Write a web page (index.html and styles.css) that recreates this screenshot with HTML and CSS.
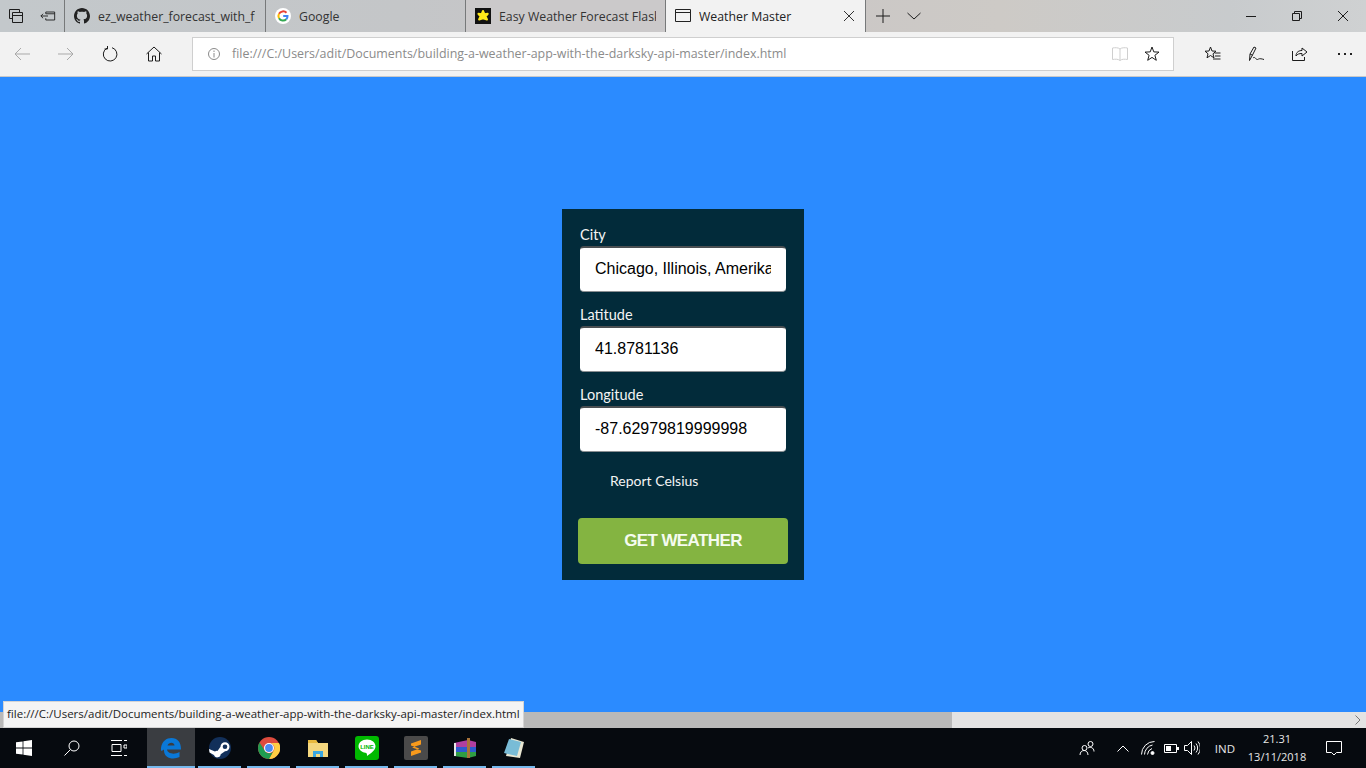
FILE: index.html
```html
<!DOCTYPE html>
<html lang="en">
<head>
    <meta charset="UTF-8">
    <title>Weather Master</title>
    <link rel="stylesheet" href="styles.css">
</head>
<body>
<div class="tabbar">
    <div class="tab-tools">
        <svg class="ico" viewBox="0 0 16 16"><path d="M1.5 1.500h10v3M1.500 1.500v9h3M4.500 4.500h10v10h-10zM4.500 7.500h10"/></svg>
        <svg class="ico" viewBox="0 0 18 16"><path d="M6.500 3.500h10v9h-10v-2M6.500 3.500v2M6.500 5.500h10M9 8H1M3.500 5.500L1 8l2.500 2.500"/></svg>
    </div>
    <div class="tab tab-first">
        <svg class="fav" viewBox="0 0 16 16"><path fill="#222" stroke="none" d="M8 0C3.600 0 0 3.600 0 8c0 3.500 2.300 6.500 5.500 7.600.4.100.5-.2.500-.4v-1.400c-2.200.5-2.700-1-2.700-1-.4-.9-.9-1.200-.9-1.200-.7-.5.100-.5.100-.5.800.1 1.200.8 1.200.8.700 1.200 1.900.9 2.300.7.100-.5.300-.9.500-1.100-1.800-.2-3.600-.9-3.600-4 0-.9.300-1.600.8-2.100-.1-.2-.4-1 .1-2.100 0 0 .7-.2 2.200.8.600-.2 1.300-.3 2-.3s1.400.1 2 .3c1.500-1 2.200-.8 2.200-.8.400 1.100.2 1.900.1 2.100.5.600.8 1.300.8 2.100 0 3.100-1.900 3.700-3.700 3.900.3.300.6.800.6 1.500v2.200c0 .2.100.5.600.4C13.700 14.500 16 11.500 16 8c0-4.400-3.600-8-8-8z"/></svg>
        <span class="tab-title">ez_weather_forecast_with_flask</span>
    </div>
    <div class="tab">
        <svg class="fav" viewBox="0 0 16 16">
            <circle cx="8" cy="8" r="8" fill="#fff" stroke="none"/>
            <path stroke="#ea4335" stroke-width="2" d="M11.500 4.800A4.700 4.700 0 0 0 4 5.800"/>
            <path stroke="#fbbc05" stroke-width="2" d="M4 5.800a4.700 4.700 0 0 0 0 4.400"/>
            <path stroke="#34a853" stroke-width="2" d="M4 10.200a4.700 4.700 0 0 0 7.300 1.100"/>
            <path stroke="#4285f4" stroke-width="2" d="M8.200 8h4.300a4.700 4.700 0 0 1-1.200 3.300"/>
        </svg>
        <span class="tab-title">Google</span>
    </div>
    <div class="tab tab-light">
        <svg class="fav" viewBox="0 0 16 16"><rect width="16" height="16" fill="#111" stroke="none"/><path fill="#ffe81a" stroke="#ffe81a" stroke-width="2" stroke-linejoin="round" d="M8 3l1.400 3.200 3.300-.4-2.100 2.700 1.400 3L8 10.200l-3.900 1.300 1.400-3-2.100-2.700 3.300.4z"/></svg>
        <span class="tab-title">Easy Weather Forecast Flask App</span>
    </div>
    <div class="tab tab-active">
        <svg class="fav" viewBox="0 0 16 14"><path stroke="#222" d="M.5.500h15v12H.5zM.5 3.500h15"/></svg>
        <span class="tab-title">Weather Master</span>
        <svg class="tab-close" viewBox="0 0 10 10"><path d="M0 0l10 10M10 0L0 10"/></svg>
    </div>
    <div class="tab-new">
        <svg class="ico-new" viewBox="0 0 14 14"><path d="M7 0v14M0 7h14"/></svg>
        <svg class="ico-down" viewBox="0 0 14 8"><path d="M.5 1L7 7l6.500-6"/></svg>
    </div>
    <div class="win-btns">
        <svg class="win-ico" viewBox="0 0 10 10"><path d="M0 5.500h10"/></svg>
        <svg class="win-ico" viewBox="0 0 10 10"><path d="M.5 2.500h7v7h-7zM2.500 2.500v-2h7v7h-2"/></svg>
        <svg class="win-ico" viewBox="0 0 10 10"><path d="M0 0l10 10M10 0L0 10"/></svg>
    </div>
</div>

<div class="toolbar">
    <div class="nav-btns">
        <svg class="nav-ico dim" viewBox="0 0 16 14"><path d="M16 7H1M7 1L1 7l6 6"/></svg>
        <svg class="nav-ico dim" viewBox="0 0 16 14"><path d="M0 7h15M9 1l6 6-6 6"/></svg>
        <svg class="nav-ico" viewBox="0 0 16 16"><path d="M5 2.200a6.800 6.800 0 1 0 5-.5M5.500 0v3h-3"/></svg>
        <svg class="nav-ico" viewBox="0 0 16 16"><path d="M.5 8L8 1l7.500 7M2.500 6.500V15h4v-5h3v5h4V6.500"/></svg>
    </div>
    <div class="addr">
        <svg class="info" viewBox="0 0 14 14"><circle cx="7" cy="7" r="5.500"/><path d="M7 6v4.500M7 3.500v1.500"/></svg>
        <span class="addr-text">file:///C:/Users/adit/Documents/building-a-weather-app-with-the-darksky-api-master/index.html</span>
        <svg class="read-ico" viewBox="0 0 16 16"><path d="M8 3C6.500 1.500 3 1.500.5 2v11.500c2.500-.5 6-.5 7.500 1 1.500-1.500 5-1.500 7.500-1V2C13 1.500 9.500 1.500 8 3zM8 3v11.500"/></svg>
        <svg class="star-ico" viewBox="0 0 16 16"><path d="M8 1l1.800 4.900 5.200.2-4.100 3.200 1.400 5L8 11.400l-4.300 2.900 1.400-5L1 6.100l5.200-.2z"/></svg>
    </div>
    <div class="tool-btns">
        <svg class="tool-ico" viewBox="0 0 17 16"><path d="M6.500 1l1.500 4 4 .2-3 2.600 1 4-3.500-2.300L3 11.800l1-4-3-2.600 4-.2zM10.500 7h6M11 10h5.500M9 13h7.500"/></svg>
        <svg class="tool-ico" viewBox="0 0 17 16"><path d="M1.500 14.500L2 8l4-7 2 1-3.500 7zM2 8l2.500 1.200M5 12c2-2 3 2 4.500 1.500S11 12 16 13.500"/></svg>
        <svg class="tool-ico" viewBox="0 0 17 16"><path d="M1.500 5v9.500h12V11M5 10c0-4 3-5.500 6-5.500V2l5 4-5 4V7.500C8 7.500 6.500 8 5 10z"/></svg>
        <div class="more"><i></i><i></i><i></i></div>
    </div>
</div>

<div class="page">
    <form class="panel">
        <label class="field-label" for="city">City</label>
        <input class="field" id="city" type="text" value="Chicago, Illinois, Amerika Serikat">
        <label class="field-label" for="lat">Latitude</label>
        <input class="field" id="lat" type="text" value="41.8781136">
        <label class="field-label" for="lng">Longitude</label>
        <input class="field" id="lng" type="text" value="-87.62979819999998">
        <div class="check-label">Report Celsius</div>
        <button class="get-btn" type="button">GET WEATHER</button>
    </form>
</div>

<div class="hscroll">
    <div class="hscroll-thumb"></div>
    <svg class="hscroll-arrow" viewBox="0 0 6 10"><path d="M.5.500L5 5 .5 9.500"/></svg>
</div>

<div class="status-tip">file:///C:/Users/adit/Documents/building-a-weather-app-with-the-darksky-api-master/index.html</div>

<div class="taskbar">
    <div class="start">
        <svg class="start-ico" viewBox="0 0 16 16"><path fill="#fff" d="M0 2.300l6.600-.9v6.200H0zM7.400 1.300L16 0v7.600H7.400zM0 8.400h6.600v6.200L0 13.700zM7.400 8.400H16V16l-8.600-1.200z"/></svg>
    </div>
    <div class="task-btn">
        <svg class="line-ico" viewBox="0 0 16 16"><circle cx="10" cy="6" r="5"/><path d="M6.500 9.500L.5 15.500"/></svg>
    </div>
    <div class="task-btn task-view">
        <svg class="line-ico" viewBox="0 0 16 16"><path d="M0 .500h11M0 15.500h11M1 4.500h9v7H1zM13 .500h3M13 5h3v3h-3zM13 15.500h3"/></svg>
    </div>
    <div class="app app-active">
        <svg class="app-ico" viewBox="0 0 22 22"><path fill="#0a78d7" d="M1 11C2 4 6.500 1 11.500 1 17.500 1 21 5 21 12.500H7c.3 3.500 6.500 6 12.500 2.500v5c-6 3-16 1.700-15.500-7.500-1 1-2 1.500-3 1-.1-.8 0-1.500 0-2.500zM7.500 8.500h7C14.300 5 8.800 4.800 7.500 8.500z"/></svg>
    </div>
    <div class="app app-open">
        <svg class="app-ico" viewBox="0 0 22 22"><circle cx="11" cy="11" r="11" fill="#12305a"/><path fill="#fff" d="M0 12l6 2.500a3.500 3.500 0 0 1 2.500-.6l3-4.200a4.500 4.500 0 1 1 4.500 4.500l-4.300 3a3.500 3.500 0 0 1-6.800.8L.5 15.500z"/><circle cx="16" cy="9.700" r="2.300" fill="#12305a"/></svg>
    </div>
    <div class="app app-open">
        <svg class="app-ico" viewBox="0 0 22 22">
            <circle cx="11" cy="11" r="11" fill="#dd4b3e"/>
            <path fill="#ffce44" d="M11 6h10a11 11 0 0 1-10 16l4.700-8.500a5 5 0 0 0-4.700-7.500z"/>
            <path fill="#1e9c50" d="M1.500 5.500a11 11 0 0 0 9.500 16.500l4.700-8.500a5 5 0 0 1-9 0z"/>
            <circle cx="11" cy="11" r="5" fill="#fff"/><circle cx="11" cy="11" r="3.900" fill="#4a8af4"/>
        </svg>
    </div>
    <div class="app app-open">
        <svg class="app-ico" viewBox="0 0 22 22"><path fill="#f4d77e" d="M1 3h8l2 3h10v14H1z"/><path fill="#e8b93e" d="M1 3h8l2 3H1z"/><path fill="#3aa6e0" d="M6 20v-6h10v6h-3v-3H9v3z"/></svg>
    </div>
    <div class="app app-open">
        <svg class="app-ico app-ico-big" viewBox="0 0 24 24"><rect width="24" height="24" rx="3" fill="#00b900"/><path fill="#fff" d="M12 3.500c5 0 8.500 3 8.500 6.800 0 4-5 7.500-8.500 9.700 0-1.500.2-3-1.500-3.200C6.500 16.200 3.500 13.500 3.500 10.300 3.500 6.500 7 3.500 12 3.500z"/><text class="line-word" x="12" y="12.500" text-anchor="middle">LINE</text></svg>
    </div>
    <div class="app app-open">
        <svg class="app-ico app-ico-big" viewBox="0 0 24 24"><rect width="24" height="24" rx="2" fill="#4a4a4a"/><path fill="#f89a1c" d="M17 4v4.500L8 11.500l9 3v2L7 20v-4.500l8.500-3L7 9.500V7.500z"/></svg>
    </div>
    <div class="app app-open">
        <svg class="app-ico app-ico-big" viewBox="0 0 24 24"><path fill="#b03fa0" d="M1 7l14-3 8 2v5H1z"/><path fill="#2d5bd0" d="M1 11h22v5H1z"/><path fill="#2f9e44" d="M1 16h22v4l-8 2-14-2z"/><path fill="#e8e8e8" d="M1 7h2v13H1z"/><path fill="#a9743a" d="M14 2h3v20h-3z"/></svg>
    </div>
    <div class="app app-open">
        <svg class="app-ico" viewBox="0 0 22 22"><path fill="#e9e7d3" d="M8 1l13 4-4 16-14-2z"/><path fill="#79bcd6" d="M6 2l12 3-4 14-13-3z"/></svg>
    </div>
    <div class="tray">
        <svg class="tray-ico people" viewBox="0 0 16 16"><circle cx="5.500" cy="8" r="2.500"/><circle cx="11.500" cy="4" r="2.500"/><path d="M1 15c0-6 8-6 8 0M9 8c2-1.500 6-.5 6 3.500"/></svg>
        <svg class="tray-ico chev" viewBox="0 0 12 7"><path d="M.5 6.500L6 1l5.500 5.500"/></svg>
        <svg class="tray-ico wifi" viewBox="0 0 14 14"><path d="M.5 13.500a13 13 0 0 1 13-13M3.500 13.500a10 10 0 0 1 8-9.500M6.500 13.500a7 7 0 0 1 4.500-6"/><circle cx="11.500" cy="12" r="1.500" fill="#fff"/></svg>
        <svg class="tray-ico batt" viewBox="0 0 15 9"><path d="M.5.500h12v8H.5z"/><path fill="#fff" stroke="none" d="M2 2h5v5H2zM13 3h2v3h-2z"/></svg>
        <svg class="tray-ico vol" viewBox="0 0 16 14"><path d="M.5 4.500h3L7.500.500v13l-4-4h-3zM10 4.500a4 4 0 0 1 0 5M12 2.500a7 7 0 0 1 0 9M14 .500a10 10 0 0 1 0 13"/></svg>
        <span class="lang">IND</span>
        <div class="clock"><span>21.31</span><span>13/11/2018</span></div>
        <svg class="notify" viewBox="0 0 16 15"><path d="M.5.500h15v11h-5L8 14l-2.500-2.500h-5z"/></svg>
    </div>
</div>
</body>
</html>
```

FILE: styles.css
```css
* {
    box-sizing: border-box;
}

html, body {
    margin: 0;
    height: 100%;
}

body {
    width: 1366px;
    height: 768px;
    overflow: hidden;
    display: flex;
    flex-direction: column;
    position: relative;
    font-family: "Open Sans", "Liberation Sans", sans-serif;
}

svg {
    display: block;
    flex: none;
    fill: none;
    stroke: #1c1c1c;
    stroke-width: 1;
}

/* tab strip */
.tabbar {
    height: 32px;
    flex: none;
    display: flex;
    background: linear-gradient(90deg, #c3c8cb 0, #c4c6c8 400px, #c9c5c6 650px, #cdcac6 1000px, #c8cbcd 1230px, #cfd1d2 1366px);
}

.tab-tools {
    width: 65px;
    display: flex;
    align-items: center;
    padding-left: 8px;
    gap: 16px;
    border-right: 1px solid #77797a;
}

.ico {
    width: 16px;
    height: 16px;
}

.tab {
    width: 200px;
    display: flex;
    align-items: center;
    padding-left: 9px;
    border-right: 1px solid #77797a;
    font-size: 12.3px;
    color: #333;
    overflow: hidden;
}

.tab-first {
    width: 201px;
}

.tab-light {
    background: #cbc9ca;
}

.tab-active {
    background: #f2f2f2;
    color: #222;
    position: relative;
}

.fav {
    width: 16px;
    height: 16px;
    margin-right: 8px;
}

.tab-title {
    white-space: nowrap;
    overflow: hidden;
    width: 157px;
}

.tab-close {
    width: 10px;
    height: 10px;
    position: absolute;
    right: 11px;
    top: 11px;
    stroke: #333;
}

.tab-new {
    display: flex;
    align-items: center;
    padding-left: 10px;
    gap: 17px;
}

.ico-new {
    width: 14px;
    height: 14px;
}

.ico-down {
    width: 14px;
    height: 8px;
}

.win-btns {
    margin-left: auto;
    display: flex;
    align-items: center;
    gap: 36px;
    padding-right: 18px;
}

.win-ico {
    width: 10px;
    height: 10px;
}

/* address row */
.toolbar {
    height: 45px;
    flex: none;
    display: flex;
    align-items: center;
    background: #f2f2f2;
    border-bottom: 1px solid #c9c9c9;
    padding-bottom: 1px;
}

.nav-btns {
    width: 192px;
    display: flex;
    align-items: center;
    padding-left: 14px;
    gap: 28px;
}

.nav-ico {
    width: 16px;
    height: 16px;
}

.nav-ico.dim {
    stroke: #a9a9a9;
    height: 14px;
}

.addr {
    width: 982px;
    height: 34px;
    display: flex;
    align-items: center;
    background: #fff;
    border: 1px solid #cfcfcf;
    padding-left: 14px;
}

.info {
    width: 14px;
    height: 14px;
    stroke: #8a8a8a;
}

.addr-text {
    margin-left: 11px;
    font-size: 12.45px;
    color: #8b8b8b;
    white-space: nowrap;
}

.read-ico {
    width: 16px;
    height: 16px;
    margin-left: auto;
    stroke: #cfcfcf;
}

.star-ico {
    width: 16px;
    height: 16px;
    margin: 0 13px 0 16px;
}

.tool-btns {
    display: flex;
    align-items: center;
    padding-left: 30px;
    gap: 26.5px;
}

.tool-ico {
    width: 17px;
    height: 16px;
}

.more {
    display: flex;
    gap: 4px;
    margin-left: 3px;
}

.more i {
    width: 2px;
    height: 2px;
    background: #222;
}

/* the weather form */
.page {
    flex: 1;
    display: flex;
    align-items: center;
    justify-content: center;
    background: #2b8bff;
}

.panel {
    width: 242px;
    height: 371px;
    padding: 16px 18px 0;
    display: flex;
    flex-direction: column;
    background: #022b3a;
}

.field-label {
    display: block;
    height: 21px;
    font-family: Lato, sans-serif;
    font-size: 14.5px;
    line-height: 20px;
    color: #f4f4f4;
}

.field {
    width: 206px;
    height: 46px;
    margin-bottom: 13px;
    padding: 0 15px 2px;
    border: 0;
    border-top: 2px solid #4a4f52;
    border-bottom: 1px solid #8a8f92;
    border-radius: 4px;
    background: #fff;
    font-family: "Liberation Sans", sans-serif;
    font-size: 16px;
    color: #000;
}

.check-label {
    height: 53px;
    padding: 6px 0 0 30px;
    font-family: Lato, sans-serif;
    font-size: 14px;
    line-height: 20px;
    color: #f4f4f4;
}

.get-btn {
    width: 210px;
    height: 46px;
    margin-left: -2px;
    flex: none;
    border: 0;
    border-radius: 4px;
    background: #84b441;
    font-family: "Liberation Sans", sans-serif;
    font-size: 17px;
    font-weight: bold;
    letter-spacing: -0.6px;
    color: #f5fbef;
}

/* horizontal scrollbar and link hint */
.hscroll {
    height: 16px;
    flex: none;
    display: flex;
    align-items: center;
    justify-content: space-between;
    background: #e3e3e3;
}

.hscroll-thumb {
    width: 952px;
    height: 16px;
    background: #b9b9b9;
}

.hscroll-arrow {
    width: 6px;
    height: 10px;
    margin-right: 5px;
    stroke: #777;
}

.status-tip {
    position: absolute;
    left: 3px;
    top: 701px;
    width: 521px;
    height: 27px;
    padding-left: 3px;
    background: #f4f4f4;
    border: 1px solid #d4d4d4;
    font-size: 11.5px;
    line-height: 24px;
    color: #222;
    white-space: nowrap;
}

/* taskbar */
.taskbar {
    height: 40px;
    flex: none;
    display: flex;
    background: #060a0f;
}

.start, .task-btn {
    width: 48px;
    display: flex;
    align-items: center;
    justify-content: center;
}

.start-ico {
    stroke: none;
    width: 16px;
    height: 16px;
}

.line-ico {
    width: 16px;
    height: 16px;
    stroke: #fff;
}

.task-view {
    width: 51px;
    padding-right: 5px;
}

.app {
    width: 49px;
    display: flex;
    align-items: center;
    justify-content: center;
    position: relative;
}

.app-active {
    width: 48px;
    background: #3a3d41;
}

.app-open::after, .app-active::after {
    content: "";
    position: absolute;
    left: 3px;
    right: 3px;
    bottom: 0;
    height: 2px;
    background: #76b9ed;
}

.app-active::after {
    left: 0;
    right: 0;
}

.app-ico {
    width: 22px;
    height: 22px;
    stroke: none;
}

.app-ico-big {
    width: 24px;
    height: 24px;
}

.line-word {
    font-family: "Liberation Sans", sans-serif;
    font-size: 6px;
    font-weight: bold;
    fill: #00b900;
    stroke: none;
}

.tray {
    margin-left: auto;
    display: flex;
    align-items: center;
    padding-right: 24px;
    color: #e8e8e8;
}

.tray-ico {
    stroke: #fff;
}

.people {
    width: 16px;
    height: 16px;
}

.chev {
    width: 12px;
    height: 7px;
    margin-left: 22px;
}

.wifi {
    width: 14px;
    height: 14px;
    margin-left: 12px;
}

.batt {
    width: 15px;
    height: 9px;
    margin-left: 9px;
}

.vol {
    width: 16px;
    height: 14px;
    margin-left: 5px;
}

.lang {
    margin-left: 15px;
    font-size: 11.5px;
}

.clock {
    width: 76px;
    margin-left: 4px;
    display: flex;
    flex-direction: column;
    align-items: center;
    font-size: 11px;
    line-height: 18px;
}

.notify {
    width: 16px;
    height: 15px;
    margin-left: 11px;
    stroke: #fff;
}
```
